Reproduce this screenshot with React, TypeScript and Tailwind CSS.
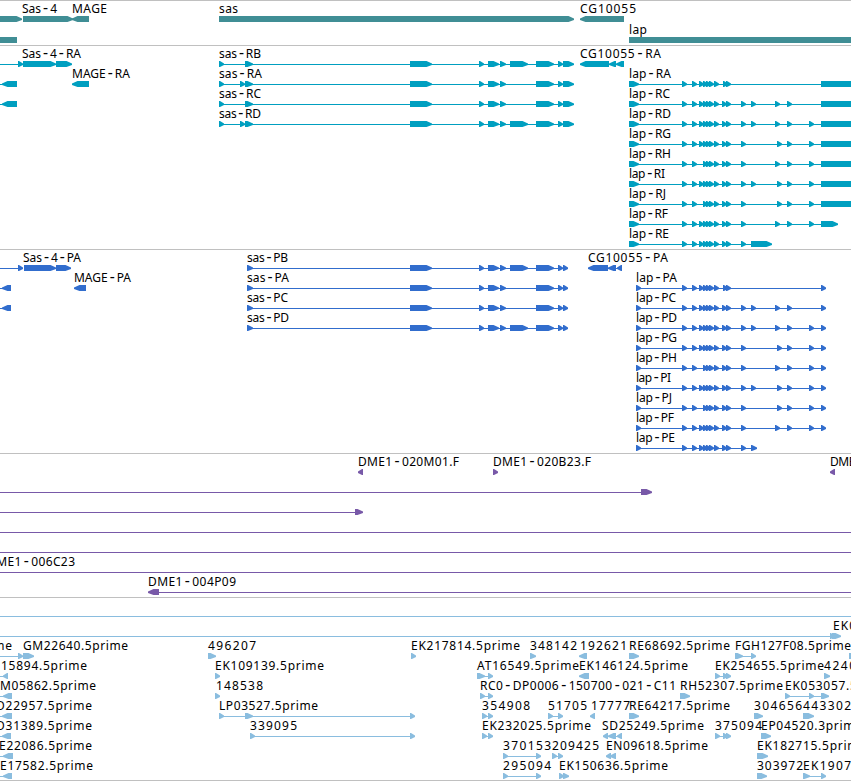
type Span = [number, number];

type Feature = {
  row: number;
  exons: Span[];
  name?: string;
  // label start and drawn width
  at?: number;
  width?: number;
  reverse?: boolean;
  from?: number;
  to?: number;
};

const tick = (x: number): Span => [x, x + 5];

const genes: Feature[] = [
  { row: 0, exons: [[-20, 22]] },
  { row: 0, name: "Sas-4", at: 22, width: 35, exons: [[23, 73]] },
  { row: 0, name: "MAGE", at: 72, width: 35, reverse: true, exons: [[72, 89]] },
  { row: 0, name: "sas", at: 219, width: 19, exons: [[219, 574]] },
  { row: 0, name: "CG10055", at: 580, width: 56, reverse: true, exons: [[580, 624]] },
  { row: 1, reverse: true, exons: [[-20, 17]] },
  { row: 1, name: "lap", at: 629, width: 18, exons: [[629, 880]] },
];

const sasCommon: Span[] = [[410, 432], tick(479), [488, 499], [500, 506], [536, 554], tick(558)];

const sasTranscripts: Feature[] = [
  { name: "sas-RB", extra: [[510, 528]] as Span[] },
  { name: "sas-RA", extra: [tick(240)] },
  { name: "sas-RC", extra: [] as Span[] },
  { name: "sas-RD", extra: [tick(240), [510, 528]] as Span[] },
].map(({ name, extra }, row) => ({
  row,
  name,
  at: 219,
  width: name === "sas-RA" ? 43 : 42,
  exons: [tick(219), [245, 253], ...sasCommon, ...extra, [563, 574]] as Span[],
}));

const sasProteins: Feature[] = ["sas-PB", "sas-PA", "sas-PC", "sas-PD"].map((name, row) => ({
  row,
  name,
  at: 247,
  width: name === "sas-PA" || name === "sas-PD" ? 42 : 41,
  exons: [
    [247, 253],
    ...sasCommon,
    ...(row === 0 || row === 3 ? [[510, 528]] : []),
    tick(563),
  ] as Span[],
}));

const lapHead = [682, 692, 699, 703, 706, 709, 714, 722, 726];
const lapShort = lapHead.filter((x) => x !== 699);

const lapForms = [
  { id: "A", ticks: [682, 692, 699, 703, 706, 709, 714, 723, 726] },
  { id: "C", ticks: [...lapHead, 741, 751, 775, 787] },
  { id: "D", ticks: [...lapHead, 741, 751, 775, 787, 809] },
  { id: "G", ticks: [...lapHead, 741, 777, 787, 809] },
  { id: "H", ticks: [...lapShort, 741, 775, 787, 809] },
  { id: "I", ticks: [...lapHead, 741, 751, 777, 787, 809] },
  { id: "J", ticks: [...lapShort, 741, 777, 787, 809] },
  { id: "F", ticks: [...lapHead, 741, 775, 787, 809] },
  { id: "E", ticks: [...lapHead, 741] },
];

const lapWidth: Record<string, number> = { A: 42, C: 41, D: 42, G: 42, H: 42, I: 36, J: 37, F: 39, E: 40 };

const lapEnd = (id: string): Span =>
  id === "E" ? [751, 772] : id === "F" ? [821, 838] : [821, 880];

const lapTranscripts: Feature[] = lapForms.map(({ id, ticks }, i) => ({
  row: i + 1,
  name: `lap-R${id}`,
  at: 629,
  width: lapWidth[id],
  exons: [[629, 639], ...ticks.map(tick), lapEnd(id)],
}));

const lapProteins: Feature[] = lapForms.map(({ id, ticks }, i) => ({
  row: i + 1,
  name: `lap-P${id}`,
  at: 636,
  width: lapWidth[id] - 1,
  exons: [tick(636), ...ticks.map(tick), id === "E" ? [751, 757] : tick(821)],
}));

const transcripts: Feature[] = [
  { row: 0, from: 0, exons: [tick(18)] },
  { row: 0, name: "Sas-4-RA", at: 22, width: 59, exons: [[23, 56], [56, 72]] },
  { row: 0, name: "CG10055-RA", at: 580, width: 81, reverse: true, exons: [[580, 609], [609, 616], [616, 624]] },
  { row: 1, from: 0, reverse: true, exons: [[2, 17]] },
  { row: 1, name: "MAGE-RA", at: 72, width: 58, reverse: true, exons: [[72, 89]] },
  { row: 2, from: 0, reverse: true, exons: [[2, 17]] },
  ...sasTranscripts,
  ...lapTranscripts,
];

const proteins: Feature[] = [
  { row: 0, from: 0, exons: [tick(18)] },
  { row: 0, name: "Sas-4-PA", at: 23, width: 58, exons: [[24, 56], [56, 71]] },
  { row: 0, name: "CG10055-PA", at: 588, width: 80, reverse: true, exons: [[588, 608], [608, 616], [617, 622]] },
  { row: 1, from: 0, reverse: true, exons: [[2, 11]] },
  { row: 1, name: "MAGE-PA", at: 74, width: 57, reverse: true, exons: [[74, 86]] },
  { row: 2, from: 0, reverse: true, exons: [[2, 11]] },
  ...sasProteins,
  ...lapProteins,
];

const bacs: Feature[] = [
  { row: 0, name: "DME1-020M01.F", at: 358, width: 101, reverse: true, exons: [tick(358)] },
  { row: 0, name: "DME1-020B23.F", at: 493, width: 98, exons: [tick(493)] },
  { row: 0, name: "DME1", at: 830, width: 32, reverse: true, exons: [tick(830)] },
  { row: 1, from: 0, exons: [[641, 652]] },
  { row: 2, from: 0, exons: [[355, 363]] },
  { row: 3, from: 0, to: 851, exons: [] },
  { row: 4, from: 0, to: 851, exons: [] },
  { row: 5, name: "DME1-006C23", at: -13, width: 88, from: 0, to: 851, exons: [] },
  { row: 6, name: "DME1-004P09", at: 148, width: 88, to: 851, reverse: true, exons: [[148, 159]] },
];

const ests: Feature[] = [
  { row: 0, from: 0, to: 851, exons: [] },
  { row: 1, name: "EK0", at: 833, width: 23, from: 0, exons: [[830, 834], [832, 841]] },

  { row: 2, name: "prime", at: -24, width: 36, from: 0, exons: [tick(18)] },
  { row: 2, name: "GM22640.5prime", at: 23, width: 105, exons: [[23, 34]] },
  { row: 2, name: "496207", at: 208, width: 48, exons: [[208, 216]] },
  { row: 2, name: "EK217814.5prime", at: 411, width: 109, exons: [tick(411)] },
  { row: 2, name: "348142", at: 530, width: 47, exons: [[530, 536]] },
  { row: 2, name: "192621", at: 580, width: 47, reverse: true, exons: [[579, 587]] },
  { row: 2, name: "RE68692.5prime", at: 629, width: 101, exons: [[629, 639]] },
  { row: 2, name: "FGH127F08.5prime", at: 735, width: 116, exons: [[735, 743], tick(751)] },
  { row: 2, exons: [[849, 860]] },

  { row: 3, name: "15894.5prime", at: 1, width: 86, from: 0, reverse: true, exons: [tick(3)] },
  { row: 3, name: "EK109139.5prime", at: 215, width: 109, exons: [tick(215)] },
  { row: 3, name: "AT16549.5prime", at: 477, width: 102, exons: [[477, 485], tick(488)] },
  { row: 3, name: "EK146124.5prime", at: 579, width: 109, reverse: true, exons: [[579, 589]] },
  { row: 3, name: "EK254655.5prime", at: 715, width: 109, exons: [tick(715), tick(723), tick(726)] },
  { row: 3, name: "4240", at: 824, width: 32, exons: [[824, 830]] },

  { row: 4, name: "M05862.5prime", at: 0, width: 96, from: 0, reverse: true, exons: [[3, 12]] },
  { row: 4, name: "148538", at: 216, width: 47, exons: [tick(215)] },
  { row: 4, name: "RC0-DP0006-150700-021-C11", at: 480, width: 196, exons: [tick(480), tick(488)] },
  { row: 4, name: "RH52307.5prime", at: 680, width: 103, exons: [[680, 690]] },
  { row: 4, name: "EK053057.5prime", at: 785, width: 109, exons: [tick(785), tick(809), [821, 829]] },

  { row: 5, name: "D22957.5prime", at: -4, width: 96, from: 0, reverse: true, exons: [[2, 12]] },
  { row: 5, name: "LP03527.5prime", at: 219, width: 99, exons: [tick(219), [245, 253], tick(410)] },
  { row: 5, name: "354908", at: 482, width: 48, exons: [tick(482), tick(488)] },
  { row: 5, name: "51705", at: 548, width: 39, exons: [tick(548), tick(558)] },
  { row: 5, name: "17777", at: 591, width: 39, reverse: true, exons: [tick(590)] },
  { row: 5, name: "RE64217.5prime", at: 629, width: 101, exons: [[629, 639]] },
  { row: 5, name: "304656", at: 754, width: 48, exons: [[754, 763]] },
  { row: 5, name: "443302", at: 803, width: 48, exons: [[803, 814]] },

  { row: 6, name: "D31389.5prime", at: -4, width: 96, from: 0, reverse: true, exons: [[2, 11]] },
  { row: 6, name: "339095", at: 250, width: 47, exons: [tick(250), tick(410)] },
  { row: 6, name: "EK232025.5prime", at: 482, width: 109, exons: [tick(482), tick(488)] },
  { row: 6, name: "SD25249.5prime", at: 602, width: 102, reverse: true, exons: [tick(603), [608, 616], tick(617)] },
  { row: 6, name: "375094", at: 715, width: 47, exons: [tick(715), tick(723), tick(726)] },
  { row: 6, name: "EP04520.3prime", at: 761, width: 101, exons: [[761, 771]] },

  { row: 7, name: "E22086.5prime", at: -1, width: 93, from: 0, reverse: true, exons: [[3, 13]] },
  { row: 7, name: "370153", at: 503, width: 48, exons: [tick(503), tick(536)] },
  { row: 7, name: "209425", at: 552, width: 47, exons: [tick(552), tick(558)] },
  { row: 7, name: "EN09618.5prime", at: 606, width: 102, reverse: true, exons: [tick(606), [610, 616]] },
  { row: 7, name: "EK182715.5prime", at: 757, width: 109, exons: [[757, 768]] },

  { row: 8, name: "E17582.5prime", at: 0, width: 93, from: 0, reverse: true, exons: [[3, 12]] },
  { row: 8, name: "295094", at: 503, width: 48, exons: [tick(503), tick(536)] },
  { row: 8, name: "EK150636.5prime", at: 559, width: 109, exons: [tick(559), [563, 569]] },
  { row: 8, name: "303972", at: 757, width: 46, exons: [[757, 767]] },
  { row: 8, name: "EK1907", at: 803, width: 48, exons: [[803, 810], tick(821)] },
];

const Label = ({ text, x, width }: { text: string; x: number; width: number }) => (
  <text x={x} y={-6} textLength={width} className="fill-black text-[12px]">
    {text.split(/(-)/).map((part, i) =>
      part === "-" ? (
        <tspan key={i} className="font-['DejaVu_Sans_Mono',monospace] text-[15px]">
          -
        </tspan>
      ) : (
        part
      )
    )}
  </text>
);

const Exon = ({ span: [a, b], reverse }: { span: Span; reverse?: boolean }) => {
  const head = b - a <= 6 ? b - a - 1 : 5.5;
  const points = reverse
    ? `${b},-3 ${a + head},-3 ${a},-0.5 ${a},1 ${a + head},3 ${b},3`
    : `${a},-3 ${b - head},-3 ${b},-0.5 ${b},1 ${b - head},3 ${a},3`;
  return <polygon points={points} />;
};

const Glyph = ({ feature }: { feature: Feature }) => {
  const { exons, name, at = 0, width = 0, reverse } = feature;
  const start = feature.from ?? Math.min(...exons.map(([a]) => a));
  const end = feature.to ?? Math.max(...exons.map(([, b]) => b));
  return (
    <g>
      <rect x={start} y={0} width={end - start} height={1} />
      {exons.map((span, i) => (
        <Exon key={i} span={span} reverse={reverse} />
      ))}
      {name && <Label text={name} x={at} width={width} />}
    </g>
  );
};

type TrackProps = { features: Feature[]; className: string; pitch?: number };

const Track = ({ features, className, pitch = 20 }: TrackProps) => (
  <section className={`w-full overflow-hidden border-t border-[#c0c0c0] ${className}`}>
    <svg className="block h-full w-full">
      {features.map((feature, i) => (
        <g key={i} transform={`translate(0 ${18 + feature.row * pitch})`}>
          <Glyph feature={feature} />
        </g>
      ))}
    </svg>
  </section>
);

const App = () => {
  return (
    <main className="flex h-[781px] w-[851px] flex-col overflow-hidden bg-white font-['Noto_Sans',sans-serif]">
      <Track features={genes} pitch={21} className="h-[45px] fill-[#408e95]" />
      <Track features={transcripts} className="h-[204px] fill-[#009fc0]" />
      <Track features={proteins} className="h-[204px] fill-[#316dcd]" />
      <Track features={bacs} className="h-[144px] fill-[#7859a8]" />
      <Track features={ests} className="h-[184px] border-b fill-[#8abddf]" />
    </main>
  );
};

export default App;
